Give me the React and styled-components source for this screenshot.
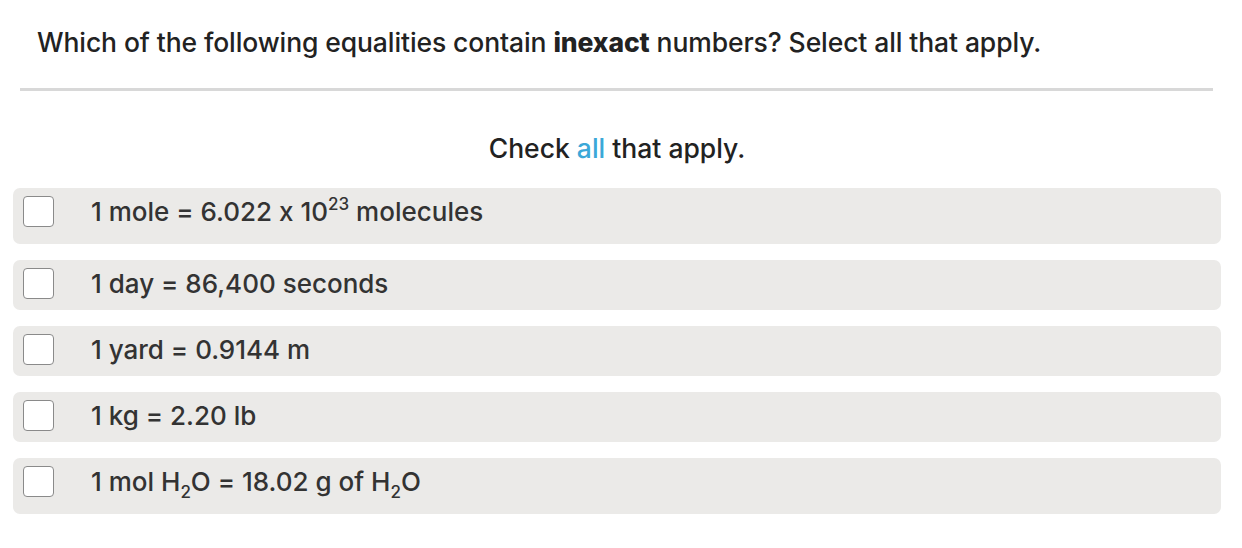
import React from "react";
import styled, { createGlobalStyle } from "styled-components";

const Global = createGlobalStyle`
  html, body { margin: 0; padding: 0; background: #fff; }
  body {
    font-family: Inter, Lato, "Noto Sans", sans-serif;
    color: #222;
    font-feature-settings: "calt" 0;
    font-variant-ligatures: no-contextual;
  }
`;

const Page = styled.div`
  width: 1242px;
  height: 548px;
  box-sizing: border-box;
  padding: 22px 21px 0 13px;
  display: flex;
  flex-direction: column;
`;

const Question = styled.h1`
  margin: 0;
  padding: 0 0 0 24px;
  font-size: 26.5px;
  line-height: 40px;
  font-weight: 500;
  color: #222;
  letter-spacing: -0.1px;
  b { font-weight: 800; }
`;

const Divider = styled.hr`
  margin: 26px 8px 0 7px;
  border: 0;
  height: 3px;
  background: #d8d8d8;
`;

const Instruction = styled.p`
  margin: 37px 0 0;
  text-align: center;
  font-size: 26.5px;
  line-height: 40px;
  font-weight: 500;
  color: #222;
  letter-spacing: 0;
`;

const Accent = styled.span`
  color: #3ba8d8;
`;

const Options = styled.div`
  margin-top: 20px;
  display: flex;
  flex-direction: column;
  gap: 16px;
`;

const Row = styled.label`
  display: flex;
  align-items: flex-start;
  min-height: ${(p) => (p.$tall ? 56 : 50)}px;
  box-sizing: border-box;
  background: #ebeae8;
  border-radius: 7px;
  padding: 8px 10px 0;
`;

const Box = styled.span`
  flex: none;
  width: 29px;
  height: 29px;
  border: 1px solid #8a8a8a;
  border-radius: 4px;
  background: #fff;
`;

const Text = styled.span`
  margin-left: 37px;
  font-size: 26px;
  line-height: 31px;
  font-weight: 500;
  color: #333;
  letter-spacing: 0;
  font-feature-settings: "calt" 0;
  sup, sub { font-size: 17px; line-height: 0; }
  sup { vertical-align: 11px; }
  sub { vertical-align: -7px; }
`;

const items = [
  { tall: true, content: <>1 mole = 6.022 x 10<sup>23</sup> molecules</> },
  { content: <>1 day = 86,400 seconds</> },
  { content: <>1 yard = 0.9144 m</> },
  { content: <>1 kg = 2.20 lb</> },
  { tall: true, content: <>1 mol H<sub>2</sub>O = 18.02 g of H<sub>2</sub>O</> },
];

export default function App() {
  return (
    <Page>
      <Global />
      <Question>
        Which of the following equalities contain <b>inexact</b> numbers? Select all that apply.
      </Question>
      <Divider />
      <Instruction>
        Check <Accent>all</Accent> that apply.
      </Instruction>
      <Options>
        {items.map((it, i) => (
          <Row key={i} $tall={it.tall}>
            <Box />
            <Text>{it.content}</Text>
          </Row>
        ))}
      </Options>
    </Page>
  );
}
